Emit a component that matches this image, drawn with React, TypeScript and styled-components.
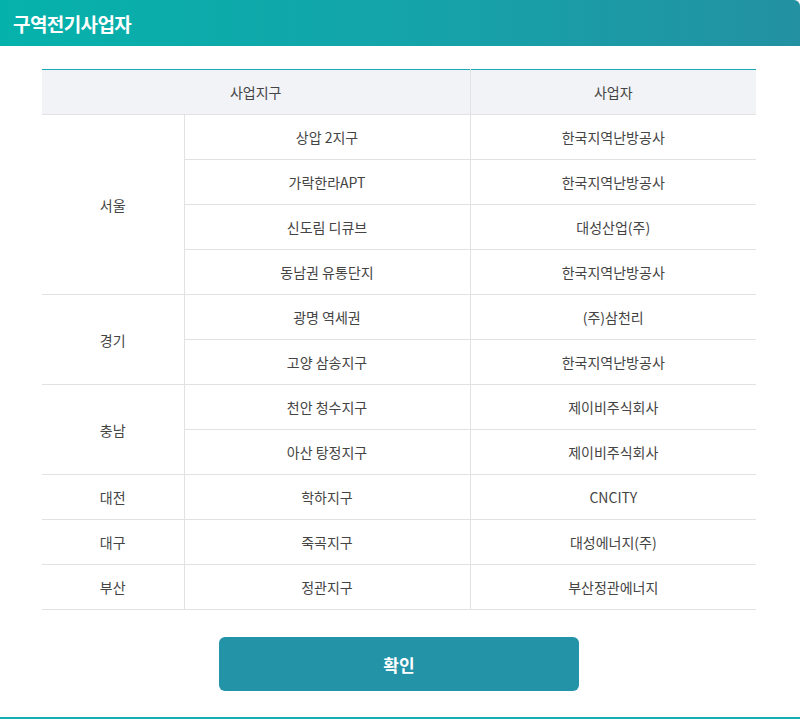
import styled, { createGlobalStyle } from "styled-components";

const GlobalStyle = createGlobalStyle`
  html, body {
    margin: 0;
    padding: 0;
    background: #ffffff;
    font-family: "Noto Sans CJK KR", "Noto Sans", sans-serif;
  }
`;

type Row = { region?: string; span?: number; district: string; company: string };

const rows: Row[] = [
  { region: "서울", span: 4, district: "상압 2지구", company: "한국지역난방공사" },
  { district: "가락한라APT", company: "한국지역난방공사" },
  { district: "신도림 디큐브", company: "대성산업(주)" },
  { district: "동남권 유통단지", company: "한국지역난방공사" },
  { region: "경기", span: 2, district: "광명 역세권", company: "(주)삼천리" },
  { district: "고양 삼송지구", company: "한국지역난방공사" },
  { region: "충남", span: 2, district: "천안 청수지구", company: "제이비주식회사" },
  { district: "아산 탕정지구", company: "제이비주식회사" },
  { region: "대전", span: 1, district: "학하지구", company: "CNCITY" },
  { region: "대구", span: 1, district: "죽곡지구", company: "대성에너지(주)" },
  { region: "부산", span: 1, district: "정관지구", company: "부산정관에너지" },
];

export default function App() {
  return (
    <>
      <GlobalStyle />
      <Frame>
        <Header>
          <Title>구역전기사업자</Title>
        </Header>
        <Body>
          <Table>
            <colgroup>
              <col style={{ width: 142 }} />
              <col style={{ width: 286 }} />
              <col style={{ width: 286 }} />
            </colgroup>
            <thead>
              <tr>
                <HeadCell colSpan={2}>사업지구</HeadCell>
                <HeadCell $last>사업자</HeadCell>
              </tr>
            </thead>
            <tbody>
              {rows.map((r, i) => (
                <tr key={i}>
                  {r.region && <Cell rowSpan={r.span}>{r.region}</Cell>}
                  <Cell>{r.district}</Cell>
                  <Cell $last>{r.company}</Cell>
                </tr>
              ))}
            </tbody>
          </Table>
          <ConfirmButton type="button">확인</ConfirmButton>
        </Body>
      </Frame>
    </>
  );
}

const Frame = styled.div`
  width: 800px;
  height: 719px;
  box-sizing: border-box;
  display: flex;
  flex-direction: column;
  border-bottom: 2px solid #13aeae;
  background: #fff;
`;

const Header = styled.header`
  height: 46px;
  display: flex;
  align-items: center;
  padding-left: 13px;
  background: linear-gradient(90deg, #05b2ab 0%, #14a4aa 50%, #2391a2 100%);
  border-top-right-radius: 6px;
`;

const Title = styled.h1`
  margin: 0;
  color: #fff;
  font-size: 19px;
  font-weight: 700;
  letter-spacing: -0.6px;
`;

const Body = styled.main`
  display: flex;
  flex-direction: column;
  align-items: center;
  padding: 23px 44px 0 42px;
`;

const Table = styled.table`
  width: 714px;
  border-collapse: collapse;
  table-layout: fixed;
  font-size: 14px;
  color: #444;
`;

const HeadCell = styled.th<{ $last?: boolean }>`
  height: 44px;
  padding: 0;
  background: #f2f3f7;
  font-weight: 400;
  color: #444;
  border-top: 1px solid #1aa9b2;
  border-bottom: 1px solid #e2e2e2;
  border-right: ${(p) => (p.$last ? "none" : "1px solid #e2e2e2")};
  text-align: center;
`;

const Cell = styled.td<{ $last?: boolean }>`
  height: 44px;
  padding: 0;
  text-align: center;
  border-bottom: 1px solid #e2e2e2;
  border-right: ${(p) => (p.$last ? "none" : "1px solid #e2e2e2")};
`;

const ConfirmButton = styled.button`
  margin-top: 27px;
  width: 360px;
  height: 54px;
  border: none;
  border-radius: 6px;
  background: #2393a8;
  color: #fff;
  font-family: inherit;
  font-size: 17px;
  font-weight: 700;
  cursor: pointer;
`;
